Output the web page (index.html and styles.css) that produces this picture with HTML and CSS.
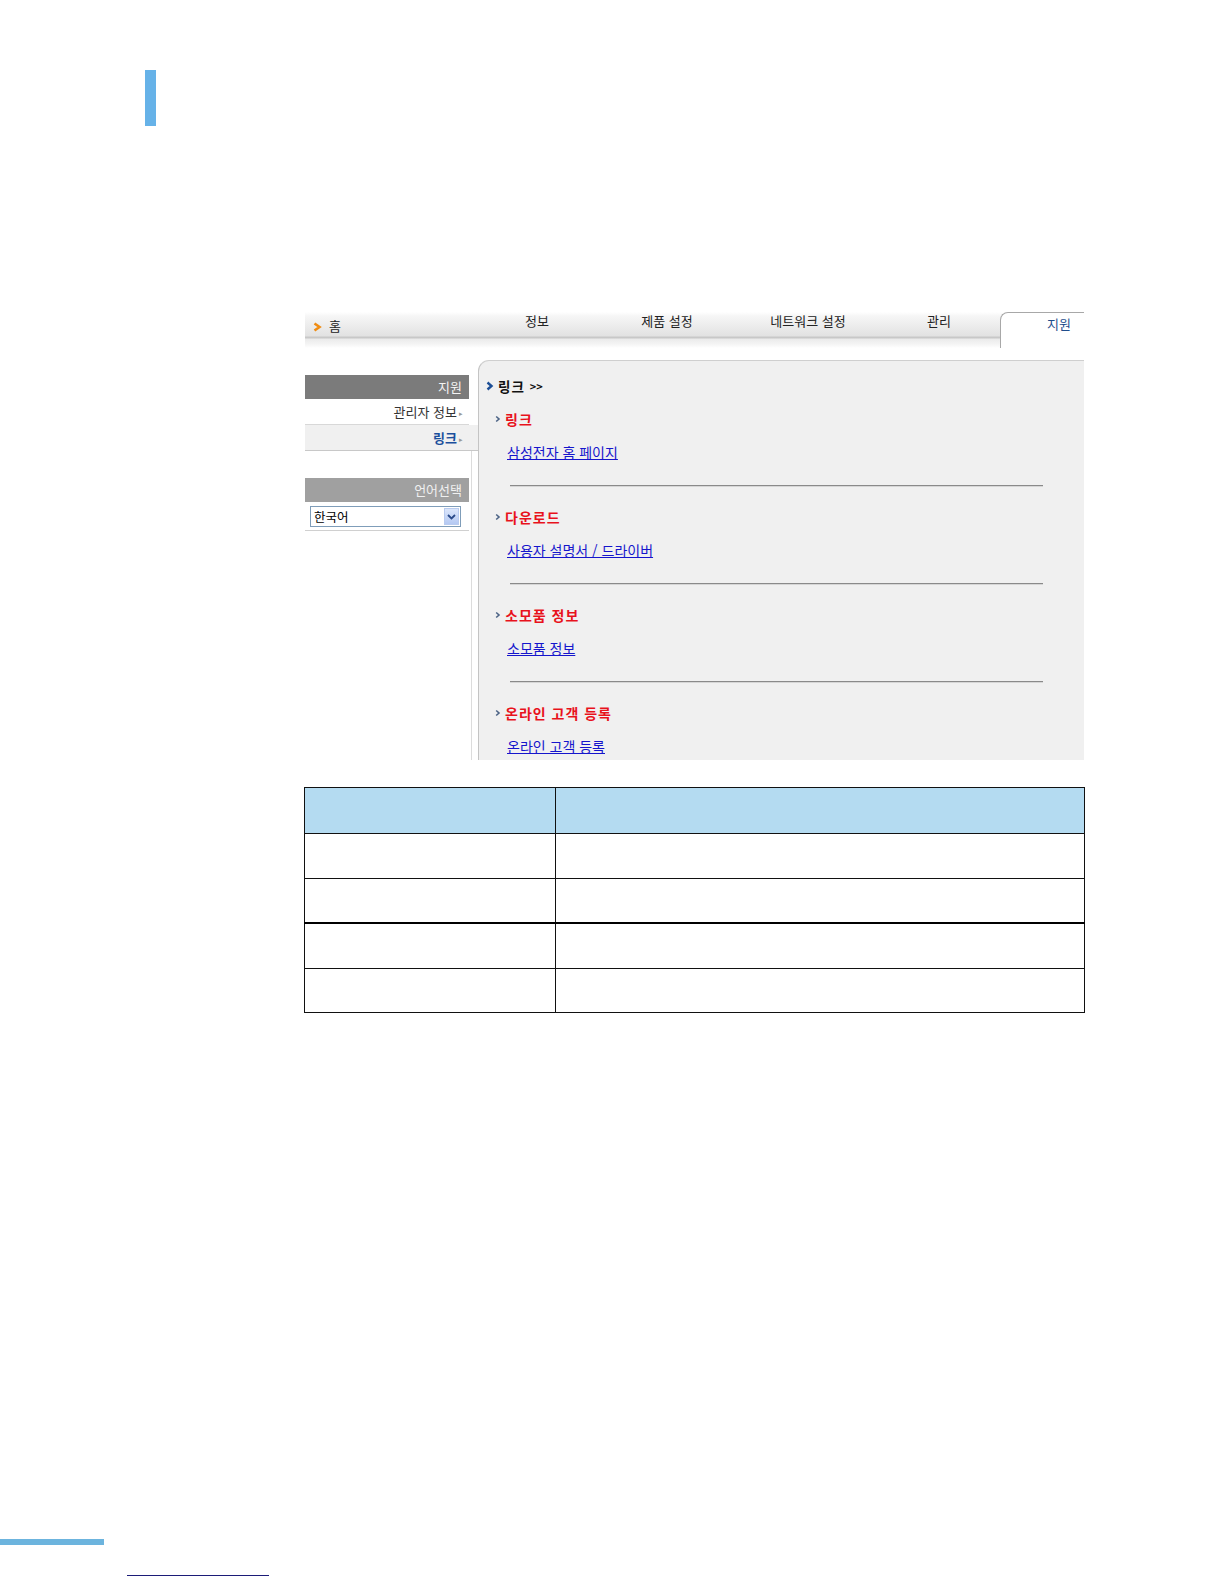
FILE: index.html
```html
<!DOCTYPE html>
<html lang="ko">
<head>
<meta charset="utf-8">
<title>지원 - 링크</title>
<link rel="stylesheet" href="styles.css">
</head>
<body>
<div class="page">
  <div class="mark"></div>

  <div class="shot">
    <div class="nav">
      <div class="nav-home">
        <svg class="home-arrow" width="9" height="10" viewBox="0 0 9 10"><path d="M1.5 1.5 L6.5 5 L1.5 8.5" fill="none" stroke="#f08c12" stroke-width="2.6" stroke-linejoin="miter"/></svg>
        <span>홈</span>
      </div>
      <div class="nav-item i1">정보</div>
      <div class="nav-item i2">제품 설정</div>
      <div class="nav-item i3">네트워크 설정</div>
      <div class="nav-item i4">관리</div>
      <div class="nav-tab">지원</div>
    </div>

    <div class="body">
      <div class="side">
        <div class="side-head">지원</div>
        <div class="side-row">관리자 정보<span class="tri">&#x25B8;</span></div>
        <div class="side-row active">링크<span class="tri">&#x25B8;</span></div>
        <div class="side-rest">
          <div class="side-head light">언어선택</div>
          <div class="select">
            <span class="select-text">한국어</span>
            <span class="select-btn">
              <svg width="9" height="6" viewBox="0 0 9 6"><path d="M1 1 L4.5 4.5 L8 1" fill="none" stroke="#2a4a8a" stroke-width="1.8"/></svg>
            </span>
          </div>
          <div class="side-line"></div>
        </div>
      </div>

      <div class="content">
        <div class="crumb">
          <svg class="crumb-arrow" width="8" height="10" viewBox="0 0 8 10"><path d="M1.5 1.5 L5.5 5 L1.5 8.5" fill="none" stroke="#1d4f96" stroke-width="2.4"/></svg>
          <span class="crumb-text">링크</span><span class="gg">&gt;&gt;</span>
        </div>

        <div class="sec first">
          <div class="sec-title"><svg class="sa" width="6" height="8" viewBox="0 0 6 8"><path d="M1.2 1.5 L4 4 L1.2 6.5" fill="none" stroke="#4d6486" stroke-width="1.6"/></svg>링크</div>
          <a class="sec-link" href="#">삼성전자 홈 페이지</a>
        </div>
        <div class="hr"></div>
        <div class="sec">
          <div class="sec-title"><svg class="sa" width="6" height="8" viewBox="0 0 6 8"><path d="M1.2 1.5 L4 4 L1.2 6.5" fill="none" stroke="#4d6486" stroke-width="1.6"/></svg>다운로드</div>
          <a class="sec-link" href="#">사용자 설명서 / 드라이버</a>
        </div>
        <div class="hr"></div>
        <div class="sec">
          <div class="sec-title"><svg class="sa" width="6" height="8" viewBox="0 0 6 8"><path d="M1.2 1.5 L4 4 L1.2 6.5" fill="none" stroke="#4d6486" stroke-width="1.6"/></svg>소모품 정보</div>
          <a class="sec-link" href="#">소모품 정보</a>
        </div>
        <div class="hr"></div>
        <div class="sec">
          <div class="sec-title"><svg class="sa" width="6" height="8" viewBox="0 0 6 8"><path d="M1.2 1.5 L4 4 L1.2 6.5" fill="none" stroke="#4d6486" stroke-width="1.6"/></svg>온라인 고객 등록</div>
          <a class="sec-link" href="#">온라인 고객 등록</a>
        </div>
      </div>
    </div>
  </div>

  <table class="grid">
    <tr class="head"><td class="c1"></td><td class="c2"></td></tr>
    <tr><td class="c1"></td><td class="c2"></td></tr>
    <tr><td class="c1"></td><td class="c2"></td></tr>
    <tr class="thick"><td class="c1"></td><td class="c2"></td></tr>
    <tr><td class="c1"></td><td class="c2"></td></tr>
  </table>

  <div class="footer">
    <div class="foot-bar"></div>
    <div class="foot-line"></div>
  </div>
</div>
</body>
</html>
```

FILE: styles.css
```css
html, body {
  margin: 0;
  padding: 0;
  background: #ffffff;
}

body {
  font-family: "Noto Sans CJK KR", "Noto Sans", sans-serif;
  font-size: 12px;
  color: #222;
}

.page {
  width: 1224px;
  height: 1584px;
  display: flex;
  flex-direction: column;
  box-sizing: border-box;
  padding-top: 70px;
}

.mark {
  margin-left: 145px;
  width: 11px;
  height: 56px;
  background: #66b2e8;
}

/* ---------- screenshot ---------- */
.shot {
  margin-top: 186px;
  margin-left: 305px;
  width: 779px;
  height: 448px;
  display: flex;
  flex-direction: column;
  overflow: hidden;
  background: #fff;
}

.nav {
  height: 36px;
  display: flex;
  align-items: flex-start;
  background: linear-gradient(to bottom, #ffffff 0px, #f6f6f6 4px, #ececec 14px, #e2e2e2 24px, #c8c8c8 25px, #c8c8c8 26px, #ebebeb 27px, #f4f4f4 32px, #ffffff 36px);
}

.nav-home {
  width: 192px;
  box-sizing: border-box;
  padding-left: 8px;
  padding-top: 5px;
  display: flex;
  align-items: center;
  font-size: 13px;
  line-height: 18px;
  color: #222;
}

.home-arrow {
  margin-right: 7px;
  margin-top: 1px;
}

.nav-item {
  line-height: 18px;
  font-size: 13px;
  color: #222;
  text-align: center;
}

.i1 { width: 80px; }
.i2 { width: 100px; margin-left: 40px; }
.i3 { width: 110px; margin-left: 36px; }
.i4 { width: 60px; margin-left: 46px; }

.nav-tab {
  margin-left: 31px;
  flex: 1;
  height: 36px;
  box-sizing: border-box;
  border: 1px solid #a8a8a8;
  border-right: none;
  border-bottom: none;
  border-top-left-radius: 8px;
  background: #ffffff;
  color: #1f4e8c;
  text-align: right;
  padding-right: 13px;
  padding-top: 2px;
  line-height: 18px;
  font-size: 13px;
}

.body {
  flex: 1;
  display: flex;
  margin-top: 12px;
}

/* side */
.side {
  width: 173px;
  display: flex;
  flex-direction: column;
  padding-top: 15px;
}

.side-head {
  width: 164px;
  height: 24px;
  box-sizing: border-box;
  background: #7b7b7b;
  color: #f4f4f4;
  text-align: right;
  padding-right: 7px;
  font-size: 13px;
  line-height: 24px;
}

.side-head.light {
  background: #a0a0a0;
  color: #f0f0f0;
}

.side-row {
  width: 164px;
  height: 26px;
  box-sizing: border-box;
  text-align: right;
  padding-right: 6px;
  line-height: 25px;
  font-size: 13px;
  color: #333;
  border-bottom: 1px solid #d8d8d8;
  background: #fff;
}

.side-row.active {
  width: 173px;
  padding-right: 15px;
  background: #f0f0f0;
  color: #1b4f9c;
  font-weight: bold;
  border-bottom: 1px solid #c8c8c8;
}

.tri {
  font-size: 7px;
  color: #999;
  margin-left: 2px;
  font-weight: normal;
  vertical-align: 1px;
}

.side-rest {
  flex: 1;
  width: 166px;
  border-right: 1px solid #dcdcdc;
  padding-top: 27px;
}

.select {
  margin: 4px 0 0 5px;
  width: 151px;
  height: 21px;
  box-sizing: border-box;
  border: 1px solid #7f9db9;
  background: #fff;
  display: flex;
  align-items: center;
  justify-content: space-between;
}

.select-text {
  padding-left: 3px;
  font-size: 12.5px;
  color: #000;
  line-height: 18px;
}

.select-btn {
  width: 15px;
  height: 17px;
  margin-right: 1px;
  background: linear-gradient(to bottom, #dbe6fb, #b5c9f3);
  border: 1px solid #b9cbef;
  box-sizing: border-box;
  display: flex;
  align-items: center;
  justify-content: center;
}

.side-line {
  margin-top: 3px;
  width: 164px;
  height: 1px;
  background: #d0d0d0;
}

/* content */
.content {
  flex: 1;
  background: #f0f0f0;
  border-top: 1px solid #cfcfcf;
  border-left: 1px solid #c4c4c4;
  border-top-left-radius: 11px;
  padding-left: 7px;
  padding-top: 15px;
  box-sizing: border-box;
}

.crumb {
  font-weight: bold;
  font-size: 13.5px;
  color: #111;
  line-height: 20px;
  display: flex;
  align-items: center;
}

.crumb-arrow {
  margin-right: 4px;
}

.crumb-text {
  letter-spacing: 1px;
}

.gg {
  font-size: 11px;
  margin-left: 5px;
}

.sec {
  padding-left: 9px;
  padding-top: 20px;
  padding-bottom: 23px;
}

.sec.first { padding-top: 13px; }

.sec-title {
  font-size: 14px;
  font-weight: bold;
  color: #e8121c;
  line-height: 20px;
  letter-spacing: 1px;
  display: flex;
  align-items: center;
}

.sa {
  margin-right: 4px;
}

.sec-link {
  display: inline-block;
  margin-top: 13px;
  margin-left: 12px;
  color: #1515cc;
  text-decoration: underline;
  font-size: 14px;
  line-height: 20px;
}

.hr {
  margin-left: 24px;
  width: 533px;
  height: 1px;
  background: #8a8a8a;
  border-bottom: 1px solid #d6d6d6;
}

/* ---------- table ---------- */
.grid {
  margin-top: 27px;
  margin-left: 304px;
  width: 781px;
  border-collapse: collapse;
}

.grid td {
  border: 1px solid #111;
  height: 43.5px;
  padding: 0;
}

.grid tr.head td {
  background: #b4dbf1;
  height: 45px;
}

.grid tr.thick td {
  border-top: 2px solid #000;
}

.grid .c1 { width: 250px; }

/* ---------- footer ---------- */
.footer {
  margin-top: auto;
  padding-bottom: 8px;
}

.foot-bar {
  width: 104px;
  height: 6px;
  background: #6cb4de;
}

.foot-line {
  margin-top: 30px;
  margin-left: 127px;
  width: 142px;
  height: 1px;
  background: #1c1c78;
}
```
